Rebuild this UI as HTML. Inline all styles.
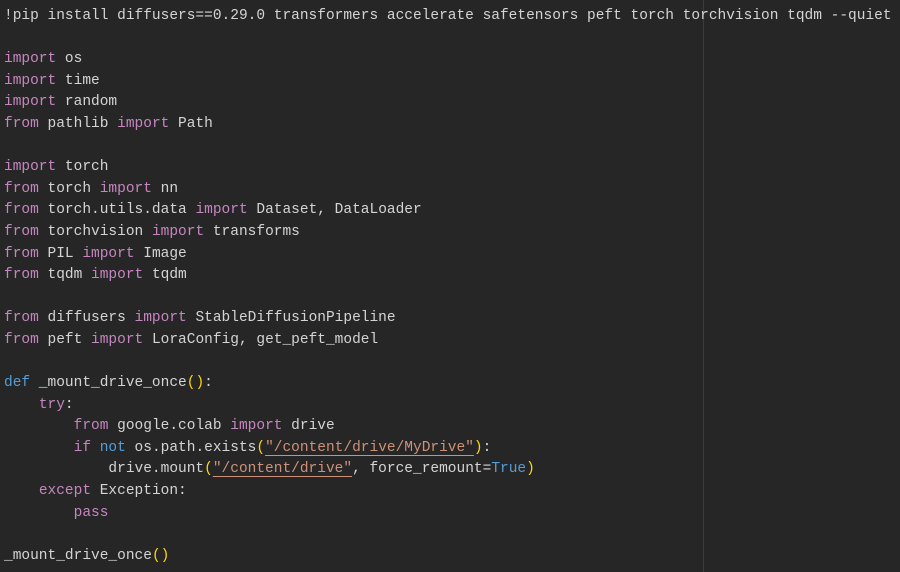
<!DOCTYPE html>
<html><head><style>
html,body{margin:0;padding:0;background:#262626;width:900px;height:572px;overflow:hidden}
pre{margin:0;position:absolute;left:4px;top:6px;font-family:"Liberation Mono",monospace;font-size:14.5px;line-height:21.6px;color:#d4d4d4;white-space:pre}
.k{color:#c586c0}.b{color:#569cd6}.s{color:#ce9178;text-decoration:underline;text-decoration-color:#ce9178;text-underline-offset:4px}.p{color:#ffd700}
.v{position:absolute;left:703px;top:0;width:1px;height:572px;background:#3c3c3c}
</style></head><body>
<div class="v"></div>
<pre>!pip install diffusers==0.29.0 transformers accelerate safetensors peft torch torchvision tqdm --quiet

<span class="k">import</span> os
<span class="k">import</span> time
<span class="k">import</span> random
<span class="k">from</span> pathlib <span class="k">import</span> Path

<span class="k">import</span> torch
<span class="k">from</span> torch <span class="k">import</span> nn
<span class="k">from</span> torch.utils.data <span class="k">import</span> Dataset, DataLoader
<span class="k">from</span> torchvision <span class="k">import</span> transforms
<span class="k">from</span> PIL <span class="k">import</span> Image
<span class="k">from</span> tqdm <span class="k">import</span> tqdm

<span class="k">from</span> diffusers <span class="k">import</span> StableDiffusionPipeline
<span class="k">from</span> peft <span class="k">import</span> LoraConfig, get_peft_model

<span class="b">def</span> _mount_drive_once<span class="p">()</span>:
    <span class="k">try</span>:
        <span class="k">from</span> google.colab <span class="k">import</span> drive
        <span class="k">if</span> <span class="b">not</span> os.path.exists<span class="p">(</span><span class="s">"/content/drive/MyDrive"</span><span class="p">)</span>:
            drive.mount<span class="p">(</span><span class="s">"/content/drive"</span>, force_remount=<span class="b">True</span><span class="p">)</span>
    <span class="k">except</span> Exception:
        <span class="k">pass</span>

_mount_drive_once<span class="p">()</span>
</pre>
</body></html>
